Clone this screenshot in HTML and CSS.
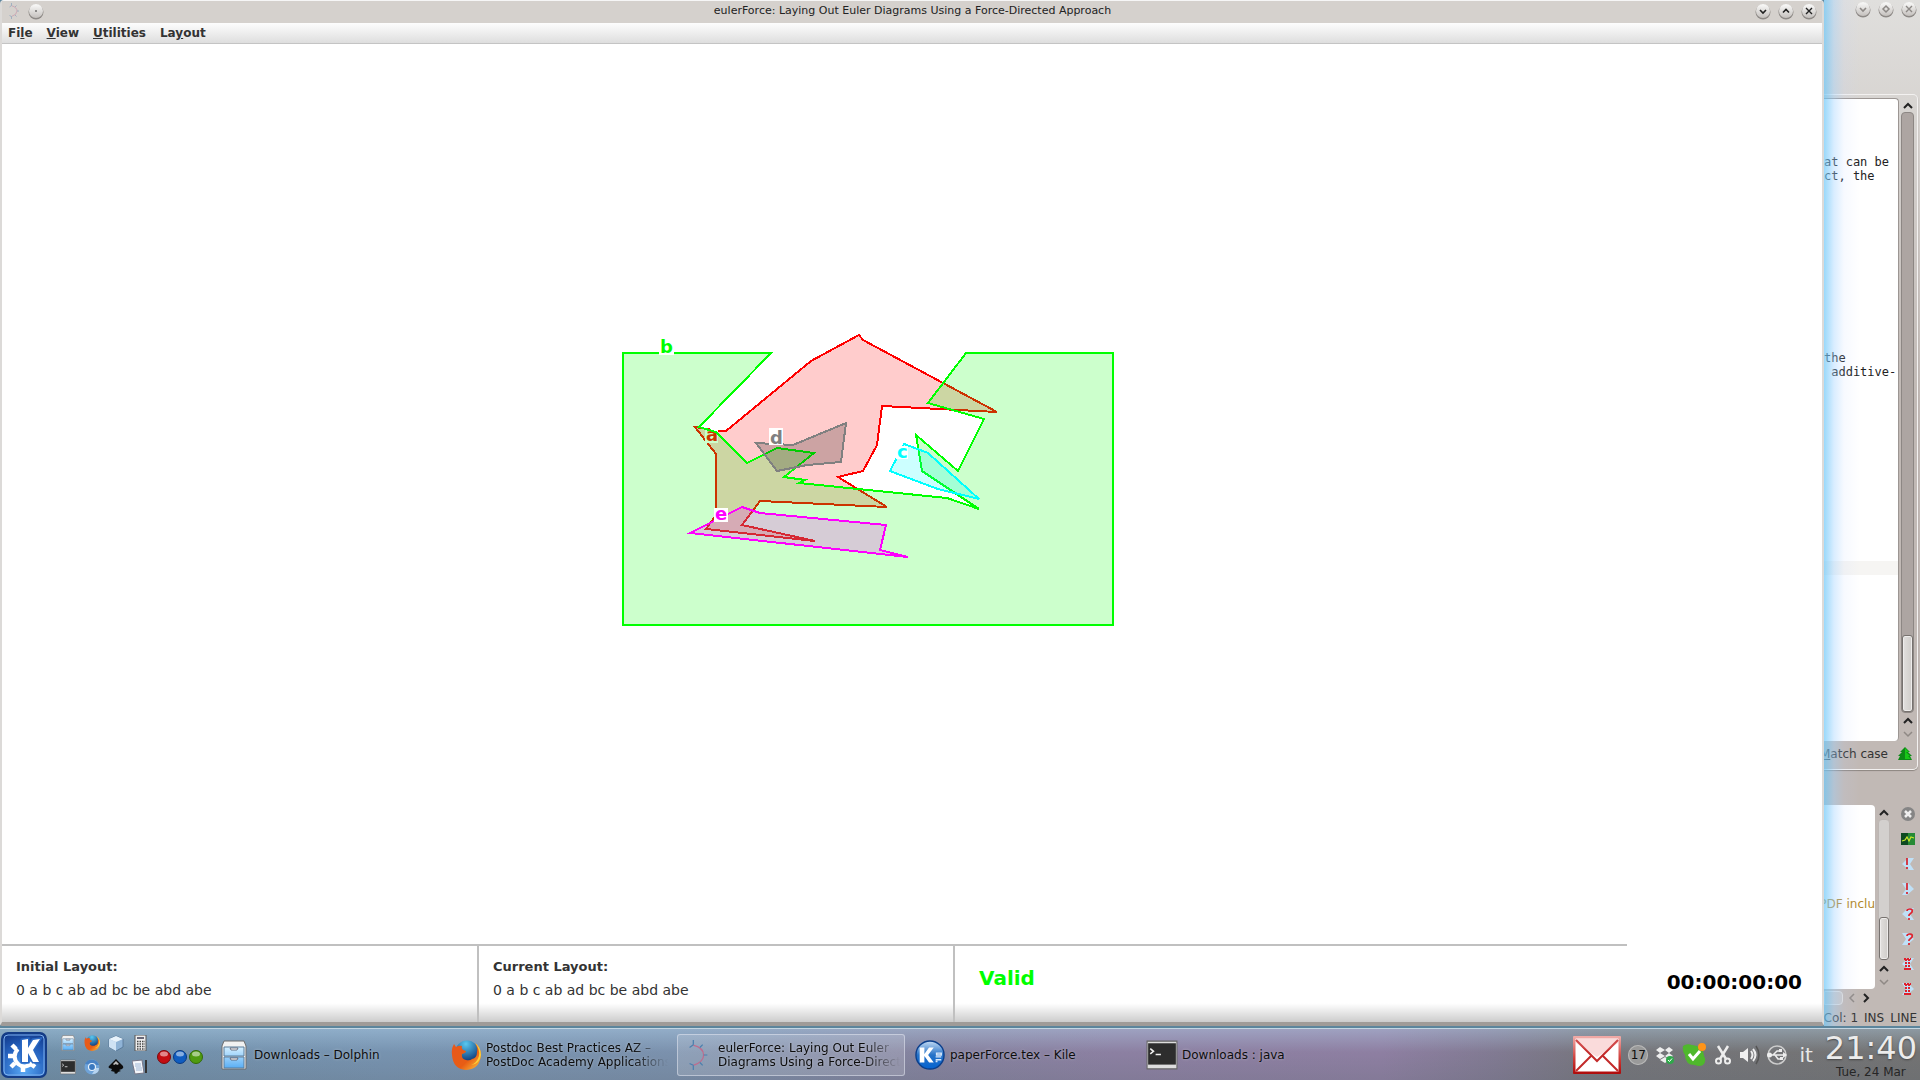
FILE: index.html
```html
<!DOCTYPE html>
<html lang="en">
<head>
<meta charset="utf-8">
<title>eulerForce</title>
<link rel="stylesheet" href="styles.css">
</head>
<body>
<svg class="defs" aria-hidden="true">
  <defs>
    <linearGradient id="knob" x1="0" y1="0" x2="0" y2="1"><stop offset="0" stop-color="#fbfbfa"/><stop offset="1" stop-color="#c4c0bd"/></linearGradient>
    <linearGradient id="drawer" x1="0" y1="0" x2="0" y2="1"><stop offset="0" stop-color="#d4efff"/><stop offset="1" stop-color="#59aef5"/></linearGradient>
    <linearGradient id="fire" x1="0" y1="0" x2="1" y2="1"><stop offset="0" stop-color="#e8571c"/><stop offset=".6" stop-color="#e85d14"/><stop offset="1" stop-color="#ffc83c"/></linearGradient>
    <radialGradient id="globe" cx=".45" cy=".15" r=".8"><stop offset="0" stop-color="#59c8f0"/><stop offset="1" stop-color="#0b3475"/></radialGradient>
    <radialGradient id="kblue" cx=".5" cy=".85" r=".9"><stop offset="0" stop-color="#58a9f5"/><stop offset=".6" stop-color="#2561bd"/><stop offset="1" stop-color="#123a8c"/></radialGradient>
    <linearGradient id="kile" x1="0" y1="0" x2="0" y2="1"><stop offset="0" stop-color="#c5dcf4"/><stop offset=".5" stop-color="#2672c8"/><stop offset="1" stop-color="#0563d0"/></linearGradient>
    <linearGradient id="mail" x1="0" y1="0" x2="0" y2="1"><stop offset="0" stop-color="#f0a9a6"/><stop offset=".6" stop-color="#cf3c38"/><stop offset="1" stop-color="#b00d0d"/></linearGradient>
  </defs>
  <symbol id="i-down" viewBox="0 0 16 17"><circle cx="8" cy="9" r="7.500" fill="#8d8986"/><circle cx="8" cy="8" r="7" fill="url(#knob)"/><path d="M5 7l3 3 3-3" fill="none" stroke="currentColor" stroke-width="1.600"/></symbol>
  <symbol id="i-up" viewBox="0 0 16 17"><circle cx="8" cy="9" r="7.500" fill="#8d8986"/><circle cx="8" cy="8" r="7" fill="url(#knob)"/><path d="M5 9.500l3-3 3 3" fill="none" stroke="currentColor" stroke-width="1.600"/></symbol>
  <symbol id="i-dia" viewBox="0 0 16 17"><circle cx="8" cy="9" r="7.500" fill="#8d8986"/><circle cx="8" cy="8" r="7" fill="url(#knob)"/><path d="M8 5l3 3-3 3-3-3z" fill="none" stroke="currentColor" stroke-width="1.500"/></symbol>
  <symbol id="i-x" viewBox="0 0 16 17"><circle cx="8" cy="9" r="7.500" fill="#8d8986"/><circle cx="8" cy="8" r="7" fill="url(#knob)"/><path d="M5 5l6 6M11 5l-6 6" fill="none" stroke="currentColor" stroke-width="1.400"/></symbol>
  <symbol id="i-dot" viewBox="0 0 16 17"><circle cx="8" cy="9" r="7.500" fill="#8d8986"/><circle cx="8" cy="8" r="7" fill="url(#knob)"/><circle cx="8" cy="8" r=".8" fill="currentColor"/></symbol>
  <symbol id="i-euler" viewBox="0 0 20 32"><path d="M5 5.500q11 3 11 10.500t-11 11" fill="none" stroke="#c06a8c" stroke-width="1.300"/><path d="M5 5V0M5 5L1 8M12 8l3-3M16 16h4M12 24l3 3M5 27v5M5 27l-4-2" fill="none" stroke="#4a7fae" stroke-width="1.300"/></symbol>
  <symbol id="i-cabinet" viewBox="0 0 26 30"><path d="M3 1h20l2 5v23H1V6z" fill="#f1f1f1" stroke="#6d6d6d"/><path d="M3 7h20v9H3zM3 17h20v11H3z" fill="url(#drawer)" stroke="#5b7d9a"/><path d="M9 8h8l-1 2h-6zM9 18h8l-1 2h-6z" fill="#fff" stroke="#556" stroke-width=".8"/></symbol>
  <symbol id="i-firefox" viewBox="0 0 30 30"><circle cx="16" cy="12" r="11.500" fill="url(#globe)"/><path d="M1 15Q0 9 3 4l2 3q3-2 6-1-1 2 1 4l3 1q0 2-4 3-1 5 4 6 4 1 6-1 5-1 5-7 1-4-2-9 6 5 6 12-1 14-15 15Q2 29 1 15z" fill="url(#fire)"/><path d="M24 3q5 6 4 13-2 7-8 9 9-1 10-10 0-8-6-12z" fill="#fbd13a"/></symbol>
  <symbol id="i-term" viewBox="0 0 30 28"><path d="M1 1h28v26H1z" fill="#ddd" stroke="#666"/><path d="M2 3h26v20H2z" fill="#2d2d2d"/><path d="M4 8l3 2.500L4 13M9 13.500h5" fill="none" stroke="#eee" stroke-width="1.500"/></symbol>
  <symbol id="a-up" viewBox="0 0 12 10"><path d="M2 8l4-4 4 4" fill="none" stroke="currentColor" stroke-width="2"/></symbol>
  <symbol id="a-down" viewBox="0 0 12 10"><path d="M2 3l4 4 4-4" fill="none" stroke="currentColor" stroke-width="1.500"/></symbol>
  <symbol id="a-left" viewBox="0 0 10 12"><path d="M7 2L3 6l4 4" fill="none" stroke="currentColor" stroke-width="1.500"/></symbol>
  <symbol id="a-right" viewBox="0 0 10 12"><path d="M3 2l4 4-4 4" fill="none" stroke="currentColor" stroke-width="2"/></symbol>
  <symbol id="p-left" viewBox="0 0 14 14"><path d="M13 1L9 7l4 6H8L1 7l6-6z" fill="#bfe0f7"/></symbol>
  <symbol id="p-right" viewBox="0 0 14 14"><path d="M1 1l4 6-4 6h5l7-6-6-6z" fill="#bfe0f7"/></symbol>
</svg>

<div class="desktop">
  <main class="window">
    <header class="titlebar">
      <div class="tb-group"><svg class="tb-app"><use href="#i-euler"/></svg><button class="knob" aria-label="On all desktops"><svg><use href="#i-dot"/></svg></button></div>
      <h1 class="title">eulerForce: Laying Out Euler Diagrams Using a Force-Directed Approach</h1>
      <div class="tb-group tb-right">
        <button class="knob" aria-label="Minimize"><svg><use href="#i-down"/></svg></button>
        <button class="knob" aria-label="Maximize"><svg><use href="#i-up"/></svg></button>
        <button class="knob" aria-label="Close"><svg><use href="#i-x"/></svg></button>
      </div>
    </header>
    <nav class="menubar">
      <button>Fi<u>l</u>e</button><button><u>V</u>iew</button><button><u>U</u>tilities</button><button>La<u>y</u>out</button>
    </nav>
    <section class="canvas">
      <svg class="diagram" viewBox="2 44 1820 900" role="img" aria-label="Euler diagram">
        <g class="set set-a">
          <polygon points="695,427 718,431 726,431 811,361 859,335 863,340 997,412 882,406 877,445 863,471 838,477 887,507 760,501 742,525 815,541 706,529 716,515 716,454"/>
          <rect x="705" y="429" width="13" height="14"/><text x="706" y="441">a</text>
        </g>
        <g class="set set-b">
          <polygon points="623,353 771,353 699,427 716,432 747,463 777,448 814,453 784,477 805,480 799,483 947,498 979,509 922,471 916,435 958,471 984,419 928,403 966,353 1113,353 1113,625 623,625"/>
          <rect x="659" y="340" width="15" height="15"/><text x="660" y="353">b</text>
        </g>
        <g class="set set-c">
          <polygon points="904,444 928,453 979,499 938,489 890,471"/>
          <rect x="896" y="446" width="12" height="13"/><text x="897" y="458">c</text>
        </g>
        <g class="set set-d">
          <polygon points="756,443 793,445 846,423 841,462 807,465 777,471"/>
          <rect x="769" y="428" width="14" height="17"/><text x="770" y="444">d</text>
        </g>
        <g class="set set-e">
          <polygon points="742,507 760,513 886,525 880,550 908,557 690,533"/>
          <rect x="714" y="508" width="14" height="14"/><text x="715" y="520">e</text>
        </g>
      </svg>
    </section>
    <footer class="status">
      <section class="pane"><h2>Initial Layout:</h2><p>0 a b c ab ad bc be abd abe</p></section>
      <section class="pane"><h2>Current Layout:</h2><p>0 a b c ab ad bc be abd abe</p></section>
      <section class="pane valid">Valid</section>
      <section class="timer">00:00:00:00</section>
    </footer>
  </main>

  <aside class="behind">
    <div class="behind-title">
      <button class="knob" aria-label="Minimize"><svg><use href="#i-down"/></svg></button>
      <button class="knob" aria-label="Restore"><svg><use href="#i-dia"/></svg></button>
      <button class="knob" aria-label="Close"><svg><use href="#i-x"/></svg></button>
    </div>
    <div class="frame">
      <div class="frame-main">
        <pre class="editor">




at can be
ct, the












the
 additive-













<span class="current"> </span></pre>
        <div class="vbar">
          <button aria-label="Scroll up"><svg><use href="#a-up"/></svg></button>
          <div class="trough"><div class="thumb thumb-big"></div></div>
          <button aria-label="Scroll up"><svg><use href="#a-up"/></svg></button>
          <button class="dim" aria-label="Scroll down"><svg><use href="#a-down"/></svg></button>
        </div>
      </div>
      <div class="search"><span><u>M</u>atch case</span>
        <svg class="tree" viewBox="0 0 14 14"><path d="M7 0l5 5h-2l4 4h-2l2 4H0l2-4H0l4-4H2z" fill="#0c8a16"/><path d="M7 1l4 4H8l4 4h-2l3 3H7z" fill="#19c619"/></svg>
      </div>
    </div>
    <div class="lower">
      <div class="log-area">
        <div class="log-row">
          <div class="log"><span>PDF inclu</span></div>
          <div class="vbar light">
            <button aria-label="Scroll up"><svg><use href="#a-up"/></svg></button>
            <div class="trough"><div class="thumb thumb-small"></div></div>
            <button aria-label="Scroll up"><svg><use href="#a-up"/></svg></button>
            <button class="dim" aria-label="Scroll down"><svg><use href="#a-down"/></svg></button>
          </div>
        </div>
        <div class="hbar"><div class="htrough"></div><button class="dim" aria-label="Scroll left"><svg><use href="#a-left"/></svg></button><button aria-label="Scroll right"><svg><use href="#a-right"/></svg></button></div>
      </div>
      <div class="tools">
        <button aria-label="Stop"><svg viewBox="0 0 14 14"><circle cx="7" cy="7" r="7" fill="#858585"/><path d="M4 4l6 6M10 4l-6 6" stroke="#eee" stroke-width="2.500"/></svg></button>
        <button aria-label="View log"><svg viewBox="0 0 14 14"><path d="M0 1h14v12H0z" fill="#0d4a20"/><path d="M7 1h7v12H7z" fill="#258a35"/><path d="M1 9l3-1 2-3 2 4 2-4 3 1" fill="none" stroke="#c9e82b" stroke-width="1.200"/></svg></button>
        <button aria-label="Previous error"><svg viewBox="0 0 14 14"><use href="#p-left"/><path d="M6 1v7M6 10v2" stroke="#d6202c" stroke-width="1.700"/></svg></button>
        <button aria-label="Next error"><svg viewBox="0 0 14 14"><use href="#p-right"/><path d="M6 1v7M6 10v2" stroke="#d6202c" stroke-width="1.700"/></svg></button>
        <button aria-label="Previous warning"><svg viewBox="0 0 14 14"><use href="#p-left"/><path d="M6 4q0-2 3-2t2 3l-3 3v1M8 11v2" fill="none" stroke="#e0202c" stroke-width="1.700"/></svg></button>
        <button aria-label="Next warning"><svg viewBox="0 0 14 14"><use href="#p-right"/><path d="M6 4q0-2 3-2t2 3l-3 3v1M8 11v2" fill="none" stroke="#e0202c" stroke-width="1.700"/></svg></button>
        <button aria-label="Previous bad box"><svg viewBox="0 0 14 14"><use href="#p-left"/><path d="M3 2h7M3 12h7M5 2v11M8 2v11" fill="none" stroke="#e0202c" stroke-width="2" stroke-dasharray="2 1"/></svg></button>
        <button aria-label="Next bad box"><svg viewBox="0 0 14 14"><use href="#p-right"/><path d="M3 2h7M3 12h7M5 2v11M8 2v11" fill="none" stroke="#e0202c" stroke-width="2" stroke-dasharray="2 1"/></svg></button>
      </div>
    </div>
    <div class="behind-status"><span>Col: 1</span><span>INS</span><span>LINE</span></div>
  </aside>
</div>

<footer class="taskbar">
  <button class="kickoff" aria-label="Application launcher">
    <svg viewBox="0 0 46 46"><rect x="1" y="1" width="44" height="44" rx="6" fill="url(#kblue)" stroke="#143c86" stroke-width="2"/><rect x="3" y="3" width="40" height="40" rx="4" fill="none" stroke="#7fb2ee"/><path d="M17 17A10 10 0 1 0 32 30" fill="none" stroke="#fff" stroke-width="4"/><path d="M22 35v5M14 31l-4 4M13 24H7M15 17l-4-4M30 32l4 3" stroke="#fff" stroke-width="4.500"/><path d="M21 8l6-1v9l5-8 7-1-7 11 6 12h-6l-5-9v9h-6z" fill="#fff" stroke="#2a68c3" stroke-width="3" paint-order="stroke"/></svg>
  </button>
  <div class="launchers">
    <button aria-label="Files"><svg><use href="#i-cabinet"/></svg></button>
    <button aria-label="Firefox"><svg><use href="#i-firefox"/></svg></button>
    <button aria-label="VirtualBox"><svg viewBox="0 0 16 16"><path d="M1 4l7-3 7 3v8l-7 4-7-4z" fill="#8fb3d6" stroke="#4a6b8c" stroke-width=".7"/><path d="M1 4l7 3v9l-7-4z" fill="#cfe2f4"/><path d="M1 4l7-3 7 3-7 3z" fill="#e9f3fb"/></svg></button>
    <button aria-label="Calculator"><svg viewBox="0 0 16 16"><path d="M3 0h11v16H3z" fill="#eee" stroke="#555"/><path d="M5 2h7v2H5z" fill="#667"/><path d="M5 6.500h8M5 9h8M5 11.500h8M5 14h8" stroke="#444" stroke-width="1.500" stroke-dasharray="1.500 1"/></svg></button>
    <button aria-label="Terminal"><svg><use href="#i-term"/></svg></button>
    <button aria-label="Chromium"><svg viewBox="0 0 16 16"><circle cx="8" cy="8" r="7.500" fill="#6fa3d8"/><path d="M1 5a7.500 7.500 0 0 1 14 1H8z" fill="#4a83c4"/><path d="M8 15l4-6h3q0 6-7 6z" fill="#b7d4f0"/><circle cx="8" cy="8" r="3.500" fill="#3a78bf" stroke="#e6f1fb" stroke-width="1.200"/></svg></button>
    <button aria-label="Inkscape"><svg viewBox="0 0 16 16"><path d="M8 0l7 7q1 2-1 3l-3 1 2 1-3 1q-1 3-4 1l1-1-4-1 1-2-3-1q-1-1 0-2z" fill="#0c0c0c"/><path d="M8 2l3 3-2 1-1-1-2 1-1-1z" fill="#bbb"/></svg></button>
    <button aria-label="Text editor"><svg viewBox="0 0 16 16"><path d="M0 2l10-1 2 13-9 1z" fill="#f4f6fa" stroke="#778"/><path d="M3 5h6M3 7h6M4 9h6M4 11h6" stroke="#8aa8cc" stroke-width=".8"/><path d="M13 1h2v13h-2z" fill="#333"/></svg></button>
  </div>
  <div class="balls">
    <svg viewBox="0 0 14 14"><circle cx="7" cy="7" r="6.500" fill="#c40d12" stroke="#7b0a0c"/><ellipse cx="7" cy="4" rx="4" ry="2.500" fill="#fff" opacity=".5"/></svg><svg viewBox="0 0 14 14"><circle cx="7" cy="7" r="6.500" fill="#0f5cc0" stroke="#0a3a80"/><ellipse cx="7" cy="4" rx="4" ry="2.500" fill="#fff" opacity=".5"/></svg><svg viewBox="0 0 14 14"><circle cx="7" cy="7" r="6.500" fill="#4f9b10" stroke="#336a08"/><ellipse cx="7" cy="4" rx="4" ry="2.500" fill="#fff" opacity=".5"/></svg>
  </div>
  <div class="tasks">
    <button class="task"><svg><use href="#i-cabinet"/></svg><span>Downloads – Dolphin</span></button>
    <button class="task"><svg><use href="#i-firefox"/></svg><span class="fade">Postdoc Best Practices AZ –<br>PostDoc Academy Applications</span></button>
    <button class="task active"><svg><use href="#i-euler"/></svg><span class="fade">eulerForce: Laying Out Euler<br>Diagrams Using a Force-Directed</span></button>
    <button class="task"><svg viewBox="0 0 32 32"><circle cx="16" cy="16" r="15" fill="url(#kile)" stroke="#0b3f8c" stroke-width="1.500"/><path d="M5 8h5v7l5-7h5l-6 8 6 8h-5l-5-7v7H5z" fill="#fff"/><path d="M22 21h6M22 18h6M23 14h5v2h-5zM22 23h2" stroke="#d9e8fa" fill="none" stroke-width="1.500"/></svg><span>paperForce.tex – Kile</span></button>
    <button class="task"><svg><use href="#i-term"/></svg><span>Downloads : java</span></button>
  </div>
  <div class="tray">
    <button class="mail" aria-label="Mail"><svg viewBox="0 0 48 38"><rect x="1" y="1" width="46" height="36" rx="2" fill="#fff" stroke="url(#mail)" stroke-width="3"/><path d="M3 4l21 21L45 4M3 35l15-15M45 35L30 20" fill="none" stroke="#c32a2a" stroke-width="2"/><path d="M3 3h42v4L24 21 3 7z" fill="#e88" opacity=".3"/></svg></button>
    <button class="updates" aria-label="Updates">17</button>
    <button aria-label="Dropbox"><svg viewBox="0 0 20 20"><path d="M5 2l5 3-5 3-4-3zM14 2l4 3-4 3-4-3zM5 8l5 3-5 3-4-3zM14 8l4 3-4 3-4-3zM10 12l4 3-4 3-5-3z" fill="#eee"/><circle cx="15" cy="15" r="4" fill="#2fa84a"/><path d="M13 15l1.500 1.500L17 13.500" stroke="#fff" fill="none"/></svg></button>
    <button class="skype" aria-label="Skype"><svg viewBox="0 0 24 24"><path d="M1 3q4-3 9-1 11 1 12 11 3 5-1 9-4 2-8 0Q3 22 3 12 0 8 1 3z" fill="#4fb82c"/><path d="M7 11l4 5 7-8" fill="none" stroke="#fff" stroke-width="3"/><circle cx="20" cy="4" r="4" fill="#ff9418"/></svg></button>
    <button aria-label="Clipboard"><svg viewBox="0 0 20 20"><path d="M5 1l8 13M15 1L7 14" stroke="#eee" stroke-width="2.500"/><circle cx="5.500" cy="16" r="2.500" fill="none" stroke="#eee" stroke-width="2"/><circle cx="14.500" cy="16" r="2.500" fill="none" stroke="#eee" stroke-width="2"/></svg></button>
    <button aria-label="Volume"><svg viewBox="0 0 20 20"><path d="M0 7h3l5-4v14l-5-4H0z" fill="#f0f0f0"/><path d="M11 6q3 4 0 8M13 4q5 6 0 12" fill="none" stroke="#eee" stroke-width="2"/><path d="M16 1q6 9 0 18" fill="none" stroke="#555" stroke-width="1.500"/></svg></button>
    <button aria-label="Devices"><svg viewBox="0 0 20 20"><circle cx="10" cy="10" r="9" fill="none" stroke="#ccc" stroke-width="1.500"/><path d="M2 10h15M6 10l4-4h3M8 10l3 4h3" fill="none" stroke="#eee" stroke-width="1.500"/><circle cx="2.500" cy="10" r="2.500" fill="#eee"/><path d="M16 7l4 3-4 3zM12 4h3v3h-3zM13 12h3v3h-3z" fill="#eee"/></svg></button>
    <button class="lang">it</button>
    <div class="clock"><time class="hour">21:40</time><span class="date">Tue, 24 Mar</span></div>
  </div>
</footer>
</body>
</html>
```

FILE: styles.css
```css
* { box-sizing: border-box; }

body {
  margin: 0;
  height: 100vh;
  display: flex;
  flex-direction: column;
  overflow: hidden;
  background: #5c859c;
  font: 12px/14px "DejaVu Sans", sans-serif;
  color: #333;
}

button {
  margin: 0;
  padding: 0;
  border: 0;
  background: none;
  font: inherit;
  color: inherit;
}

h1, h2, p, pre { margin: 0; }
svg { display: block; }
.defs { position: absolute; width: 0; height: 0; }

.desktop {
  flex: 1;
  min-height: 0;
  display: flex;
  padding-bottom: 2px;
}

/* Main window */
.window {
  position: relative;
  z-index: 1;
  flex: 1;
  min-width: 0;
  display: flex;
  flex-direction: column;
  background: #fff;
  border: 2px solid #dcdad8;
  border-top: 1px solid #f6f6f6;
  border-bottom: 4px solid #9f9b98;
  border-radius: 4px 4px 2px 2px;
}

/* Glow of the focused window over its neighbour */
.window::after {
  content: "";
  position: absolute;
  left: calc(100% + 2px);
  top: -1px;
  bottom: -4px;
  width: 36px;
  background: linear-gradient(to right, rgba(110, 200, 248, .7), rgba(160, 210, 255, .4) 10px, rgba(190, 210, 255, .12) 20px, transparent);
  pointer-events: none;
}

.titlebar {
  height: 22px;
  display: grid;
  grid-template-columns: 1fr auto 1fr;
  align-items: center;
  padding: 0 5px 2px 6px;
  background: #d5d1cd;
  color: #222;
}
.title { font-size: 11px; font-weight: 400; line-height: 14px; }
.tb-group { display: flex; align-items: center; gap: 8px; }
.tb-right { justify-content: flex-end; gap: 7px; }
.tb-app { width: 12px; height: 16px; opacity: .6; }
.knob svg { width: 16px; height: 17px; }

.menubar {
  height: 21px;
  display: flex;
  gap: 14px;
  padding-left: 6px;
  background: linear-gradient(#fdfdfd, #dedede);
  border-bottom: 1px solid #c4c4c4;
  font-weight: 700;
}

.canvas { flex: 1; min-height: 0; }
.diagram { width: 100%; height: 100%; }

.set polygon { stroke: currentColor; stroke-width: 2; fill: currentColor; fill-opacity: .2; shape-rendering: crispEdges; }
.set rect { fill: #fff; }
.set text { fill: currentColor; font-size: 18px; font-weight: 700; }
.set-a { color: #f00; }
.set-b { color: #0f0; }
.set-c { color: #0ff; }
.set-d { color: #808080; }
.set-d polygon { fill: #000; }
.set-e { color: #f0f; }

.status {
  height: 78px;
  display: grid;
  grid-template-columns: 477fr 476fr 672fr 195fr;
  background: linear-gradient(transparent 76%, rgba(0, 0, 0, .2));
}
.pane {
  border-top: 2px solid #c0c0c0;
  border-right: 2px solid #c0c0c0;
  padding: 12px 14px;
}
.pane h2 { font-size: 13px; line-height: 18px; }
.pane p { font-size: 14px; line-height: 18px; padding-top: 5px; }
.valid {
  border-right: 0;
  padding: 20px 24px;
  font-size: 20px;
  line-height: 24px;
  font-weight: 700;
  color: #0f0;
}
.timer {
  padding: 26px 20px 0 0;
  text-align: right;
  font-size: 20px;
  line-height: 24px;
  font-weight: 700;
  color: #000;
}

/* Editor window behind */
.behind {
  flex: 0 0 96px;
  min-width: 0;
  overflow: hidden;
  display: flex;
  flex-direction: column;
  background: linear-gradient(#e0dfdd, #d8d5d2 100px, #c1b9b5 400px);
}
.behind-title {
  height: 94px;
  display: flex;
  justify-content: flex-end;
  align-items: flex-start;
  gap: 7px;
  padding: 1px 3px 0 0;
  color: #8c8885;
}
.frame {
  flex: 1;
  min-height: 0;
  display: flex;
  flex-direction: column;
  margin-right: 2px;
  border: solid #f3f1f0;
  border-width: 1px 1px 1px 0;
  border-radius: 0 5px 5px 0;
  box-shadow: 0 1px 1px #8c8580;
  padding: 3px 1px 0 0;
}
.frame-main { flex: 1; min-height: 0; display: flex; }
.editor {
  flex: 1;
  min-width: 0;
  overflow: hidden;
  background: #fff;
  border: solid #9c9693;
  border-width: 1px 1px 0 0;
  border-radius: 0 4px 4px 0;
  font: 12px/14px "DejaVu Sans Mono", monospace;
  color: #222;
}
.current { display: block; background: #f6f5f3; }

.vbar {
  width: 17px;
  display: flex;
  flex-direction: column;
  align-items: center;
  color: #222;
}
.vbar button { height: 14px; display: flex; align-items: center; }
.vbar svg { width: 12px; height: 10px; }
.vbar .dim, .hbar .dim { color: #8f8985; }
.trough {
  flex: 1;
  width: 13px;
  display: flex;
  flex-direction: column;
  justify-content: flex-end;
  background: #ada5a2;
  border: 1px solid #8d8784;
  border-radius: 4px;
}
.thumb {
  background: linear-gradient(to right, #e2e0de, #cfccc9);
  border: 1px solid #77726f;
  border-radius: 3px;
  box-shadow: inset 0 0 0 1px #eeeceb;
}
.thumb-big { height: 77px; }
.thumb-small { height: 43px; }

.search {
  height: 28px;
  display: flex;
  align-items: center;
  justify-content: flex-end;
  gap: 10px;
  padding: 0 4px 2px 0;
  white-space: nowrap;
}
.tree { width: 14px; height: 14px; flex: none; }

.lower { height: 201px; margin-top: 35px; display: flex; }
.log-area { flex: 1; min-width: 0; display: flex; flex-direction: column; }
.log-row { flex: 1; min-height: 0; display: flex; }
.log {
  flex: 1;
  min-width: 0;
  overflow: hidden;
  display: flex;
  justify-content: flex-end;
  align-items: center;
  padding-top: 14px;
  background: #fff;
  border-radius: 0 4px 4px 0;
  color: #b1882a;
  white-space: nowrap;
}
.light .trough { width: 12px; background: #d3d0ce; border-color: #bcb6b3; }
.hbar { height: 17px; display: flex; align-items: center; gap: 4px; padding-right: 21px; color: #222; }
.hbar svg { width: 10px; height: 12px; }
.htrough { flex: 1; height: 14px; background: #cbc6c4; border: 1px solid #e0dddb; border-radius: 0 4px 4px 0; }
.tools {
  width: 28px;
  display: flex;
  flex-direction: column;
  align-items: center;
  gap: 11px;
  padding: 2px 0 0 4px;
}
.tools svg { width: 14px; height: 14px; }
.behind-status {
  height: 20px;
  display: flex;
  justify-content: flex-end;
  gap: 6px;
  padding: 5px 3px 0 0;
  white-space: nowrap;
}

/* Taskbar */
.taskbar {
  height: 52px;
  display: flex;
  align-items: center;
  border-top: 1px solid #c3d6e2;
  background:
    linear-gradient(rgba(190, 225, 250, .35), transparent 45%, rgba(90, 100, 110, .2)),
    linear-gradient(to right, #6f8fa8, #7793b0 20%, #7b91ad 35%, #85839f 48%, #8c80a2 58%, #8e7fa2 72%, #817a92 78%, #75757a 84%, #737373);
  color: #0d0d0d;
}
.kickoff { padding-left: 1px; }
.kickoff svg { width: 46px; height: 46px; }
.launchers {
  display: grid;
  grid-template-columns: repeat(4, 16px);
  gap: 8px;
  margin-left: 13px;
}
.launchers svg { width: 16px; height: 16px; }
.balls { display: flex; gap: 2px; margin: 4px 10px 0 9px; }
.balls svg { width: 14px; height: 14px; }
.tasks { flex: 1; min-width: 0; display: flex; gap: 4px; }
.task {
  flex: 0 1 228px;
  min-width: 0;
  height: 42px;
  display: flex;
  align-items: center;
  gap: 4px;
  padding: 0 4px;
  border: 1px solid transparent;
  border-radius: 3px;
  text-align: left;
  white-space: nowrap;
  text-shadow: 0 0 3px rgba(255, 255, 255, .4);
}
.task svg { flex: 0 0 32px; height: 30px; }
.fade { flex: 1; min-width: 0; overflow: hidden; mask-image: linear-gradient(to right, #000 80%, transparent); }
.active { background: rgba(255, 255, 255, .15); border-color: rgba(225, 230, 240, .55); }

.tray { display: flex; align-items: center; gap: 7px; }
.tray button svg { width: 20px; height: 20px; }
.tray .mail svg { width: 48px; height: 38px; }
.tray .skype svg { width: 24px; height: 24px; }
.updates {
  width: 20px;
  height: 20px;
  border-radius: 10px;
  background: #9a9a9a;
  box-shadow: inset 0 0 0 1px #b8b8b8;
  font-size: 12px;
}
.lang { font-size: 20px; line-height: 24px; color: #e8e8e8; padding: 0 5px 0 5px; }
.clock { display: flex; flex-direction: column; align-items: center; padding-right: 3px; }
.hour { font-size: 32px; line-height: 34px; color: #ececec; text-shadow: 0 1px 2px #444; }
.date { color: #262626; }
```
